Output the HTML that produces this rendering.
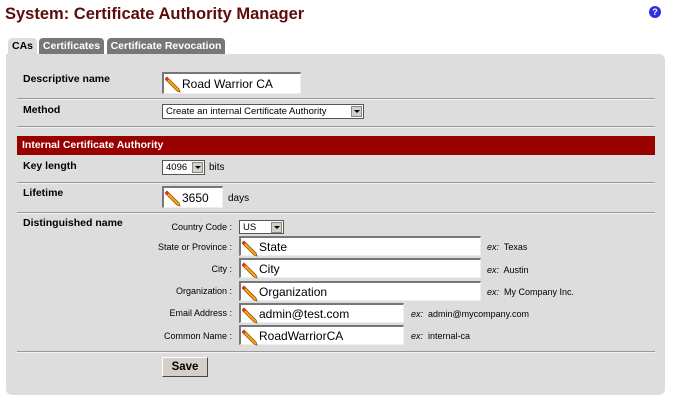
<!DOCTYPE html>
<html><head><meta charset="utf-8"><style>
body{margin:0;width:673px;height:403px;background:#fff;font-family:"Liberation Sans","DejaVu Sans",sans-serif;position:relative;overflow:hidden}
.a{position:absolute;white-space:nowrap}
.t{font-size:16.5px;font-weight:bold;color:#5d0b0b;left:5px;top:5px}
.tab{position:absolute;top:38px;height:16px;font-size:10.5px;font-weight:bold;color:#fff;background:#777;border-radius:4px 4px 0 0;line-height:17px;text-align:center;white-space:nowrap}
.panel{position:absolute;left:6px;top:54px;width:659px;height:341px;background:#ddd;border-radius:0 6px 6px 6px}
.lbl{font-size:10.5px;font-weight:bold;color:#000}
.hr{position:absolute;left:17px;width:638px;height:1px;background:#999;border-bottom:1px solid #f2f2f2}
.inp{position:absolute;background:#fff;border-top:2px solid #777;border-left:2px solid #777;border-right:1px solid #eee;border-bottom:1px solid #eee;box-sizing:border-box;font-size:12px;line-height:17px}
.inp svg{position:absolute;left:1px;top:1px}
.inp span{position:absolute;left:18px;top:1px}
.sel{position:absolute;background:#fff;border:1px solid #555;box-sizing:border-box;font-size:9.5px;line-height:13px;padding-left:3px;white-space:nowrap}
.sel i{position:absolute;right:1px;top:1px;width:11px;height:11px;background:#d4d0c8;border:1px solid #888;box-sizing:border-box}
.sel i:after{content:"";position:absolute;left:2px;top:3px;border-left:3px solid transparent;border-right:3px solid transparent;border-top:3px solid #000}
.sm{font-size:9px;color:#000}
.r{text-align:right;width:100px}
</style></head><body>
<div class="a t">System: Certificate Authority Manager</div>
<div class="a" style="left:649px;top:6px;width:12px;height:12px;border-radius:50%;background:#3030e0;color:#fff;font-size:9px;font-weight:bold;text-align:center;line-height:12px">?</div>
<div class="panel"></div>
<div class="tab" style="left:8px;width:29px;background:#ddd;color:#000;height:17px">CAs</div>
<div class="tab" style="left:39px;width:65px">Certificates</div>
<div class="tab" style="left:107px;width:118px">Certificate Revocation</div>

<div class="a lbl" style="left:23px;top:73px">Descriptive name</div>
<div class="inp" style="left:162px;top:72px;width:139px;height:22px"><svg width="16" height="18" viewBox="0 0 16 18"><path d="M2 2 L14 14 L15 17 L12 16 L0 4 Z" fill="#f4a820" stroke="#a05000" stroke-width=".8"/><path d="M0 4 L2 2 L4 4 L2 6Z" fill="#e03030"/></svg><span style="top:2px">Road Warrior CA</span></div>
<div class="hr" style="top:98px"></div>
<div class="a lbl" style="left:23px;top:104px">Method</div>
<div class="sel" style="left:162px;top:104px;width:202px;height:15px">Create an internal Certificate Authority<i></i></div>
<div class="hr" style="top:126px"></div>
<div class="a" style="left:17px;top:136px;width:638px;height:19px;background:#990000;color:#fff;font-size:10.5px;font-weight:bold;line-height:19px;padding-left:5px;box-sizing:border-box">Internal Certificate Authority</div>
<div class="a lbl" style="left:23px;top:160px">Key length</div>
<div class="sel" style="left:162px;top:160px;width:43px;height:15px">4096<i></i></div>
<div class="a sm" style="left:209px;top:162px;font-size:10px">bits</div>
<div class="hr" style="top:182px"></div>
<div class="a lbl" style="left:23px;top:187px">Lifetime</div>
<div class="inp" style="left:162px;top:186px;width:61px;height:22px"><svg width="16" height="18" viewBox="0 0 16 18"><path d="M2 2 L14 14 L15 17 L12 16 L0 4 Z" fill="#f4a820" stroke="#a05000" stroke-width=".8"/><path d="M0 4 L2 2 L4 4 L2 6Z" fill="#e03030"/></svg><span style="top:2px">3650</span></div>
<div class="a sm" style="left:228px;top:193px;font-size:10px">days</div>
<div class="hr" style="top:212px"></div>
<div class="a lbl" style="left:23px;top:217px">Distinguished name</div>

<div class="a sm r" style="left:132px;top:222px">Country Code :</div>
<div class="sel" style="left:239px;top:220px;width:45px;height:14px">US<i></i></div>

<div class="a sm r" style="left:132px;top:242px">State or Province :</div>
<div class="inp" style="left:239px;top:236px;width:242px;height:20px"><svg width="16" height="18" viewBox="0 0 16 18"><path d="M2 2 L14 14 L15 17 L12 16 L0 4 Z" fill="#f4a820" stroke="#a05000" stroke-width=".8"/><path d="M0 4 L2 2 L4 4 L2 6Z" fill="#e03030"/></svg><span>State</span></div>
<div class="a sm" style="left:487px;top:242px"><i>ex:</i>&nbsp; Texas</div>

<div class="a sm r" style="left:132px;top:264px">City :</div>
<div class="inp" style="left:239px;top:258px;width:242px;height:20px"><svg width="16" height="18" viewBox="0 0 16 18"><path d="M2 2 L14 14 L15 17 L12 16 L0 4 Z" fill="#f4a820" stroke="#a05000" stroke-width=".8"/><path d="M0 4 L2 2 L4 4 L2 6Z" fill="#e03030"/></svg><span>City</span></div>
<div class="a sm" style="left:487px;top:265px"><i>ex:</i>&nbsp; Austin</div>

<div class="a sm r" style="left:132px;top:286px">Organization :</div>
<div class="inp" style="left:239px;top:281px;width:242px;height:20px"><svg width="16" height="18" viewBox="0 0 16 18"><path d="M2 2 L14 14 L15 17 L12 16 L0 4 Z" fill="#f4a820" stroke="#a05000" stroke-width=".8"/><path d="M0 4 L2 2 L4 4 L2 6Z" fill="#e03030"/></svg><span>Organization</span></div>
<div class="a sm" style="left:487px;top:287px"><i>ex:</i>&nbsp; My Company Inc.</div>

<div class="a sm r" style="left:132px;top:308px">Email Address :</div>
<div class="inp" style="left:239px;top:303px;width:165px;height:20px"><svg width="16" height="18" viewBox="0 0 16 18"><path d="M2 2 L14 14 L15 17 L12 16 L0 4 Z" fill="#f4a820" stroke="#a05000" stroke-width=".8"/><path d="M0 4 L2 2 L4 4 L2 6Z" fill="#e03030"/></svg><span>admin@test.com</span></div>
<div class="a sm" style="left:411px;top:309px"><i>ex:</i>&nbsp; admin@mycompany.com</div>

<div class="a sm r" style="left:132px;top:331px">Common Name :</div>
<div class="inp" style="left:239px;top:325px;width:165px;height:20px"><svg width="16" height="18" viewBox="0 0 16 18"><path d="M2 2 L14 14 L15 17 L12 16 L0 4 Z" fill="#f4a820" stroke="#a05000" stroke-width=".8"/><path d="M0 4 L2 2 L4 4 L2 6Z" fill="#e03030"/></svg><span>RoadWarriorCA</span></div>
<div class="a sm" style="left:411px;top:331px"><i>ex:</i>&nbsp; internal-ca</div>

<div class="hr" style="top:351px"></div>
<div class="a" style="left:162px;top:357px;width:46px;height:20px;background:#d4d0c8;border:1px solid #fff;border-right-color:#444;border-bottom-color:#444;box-sizing:border-box;font-size:11.5px;font-weight:bold;text-align:center;line-height:18px">Save</div>
</body></html>
